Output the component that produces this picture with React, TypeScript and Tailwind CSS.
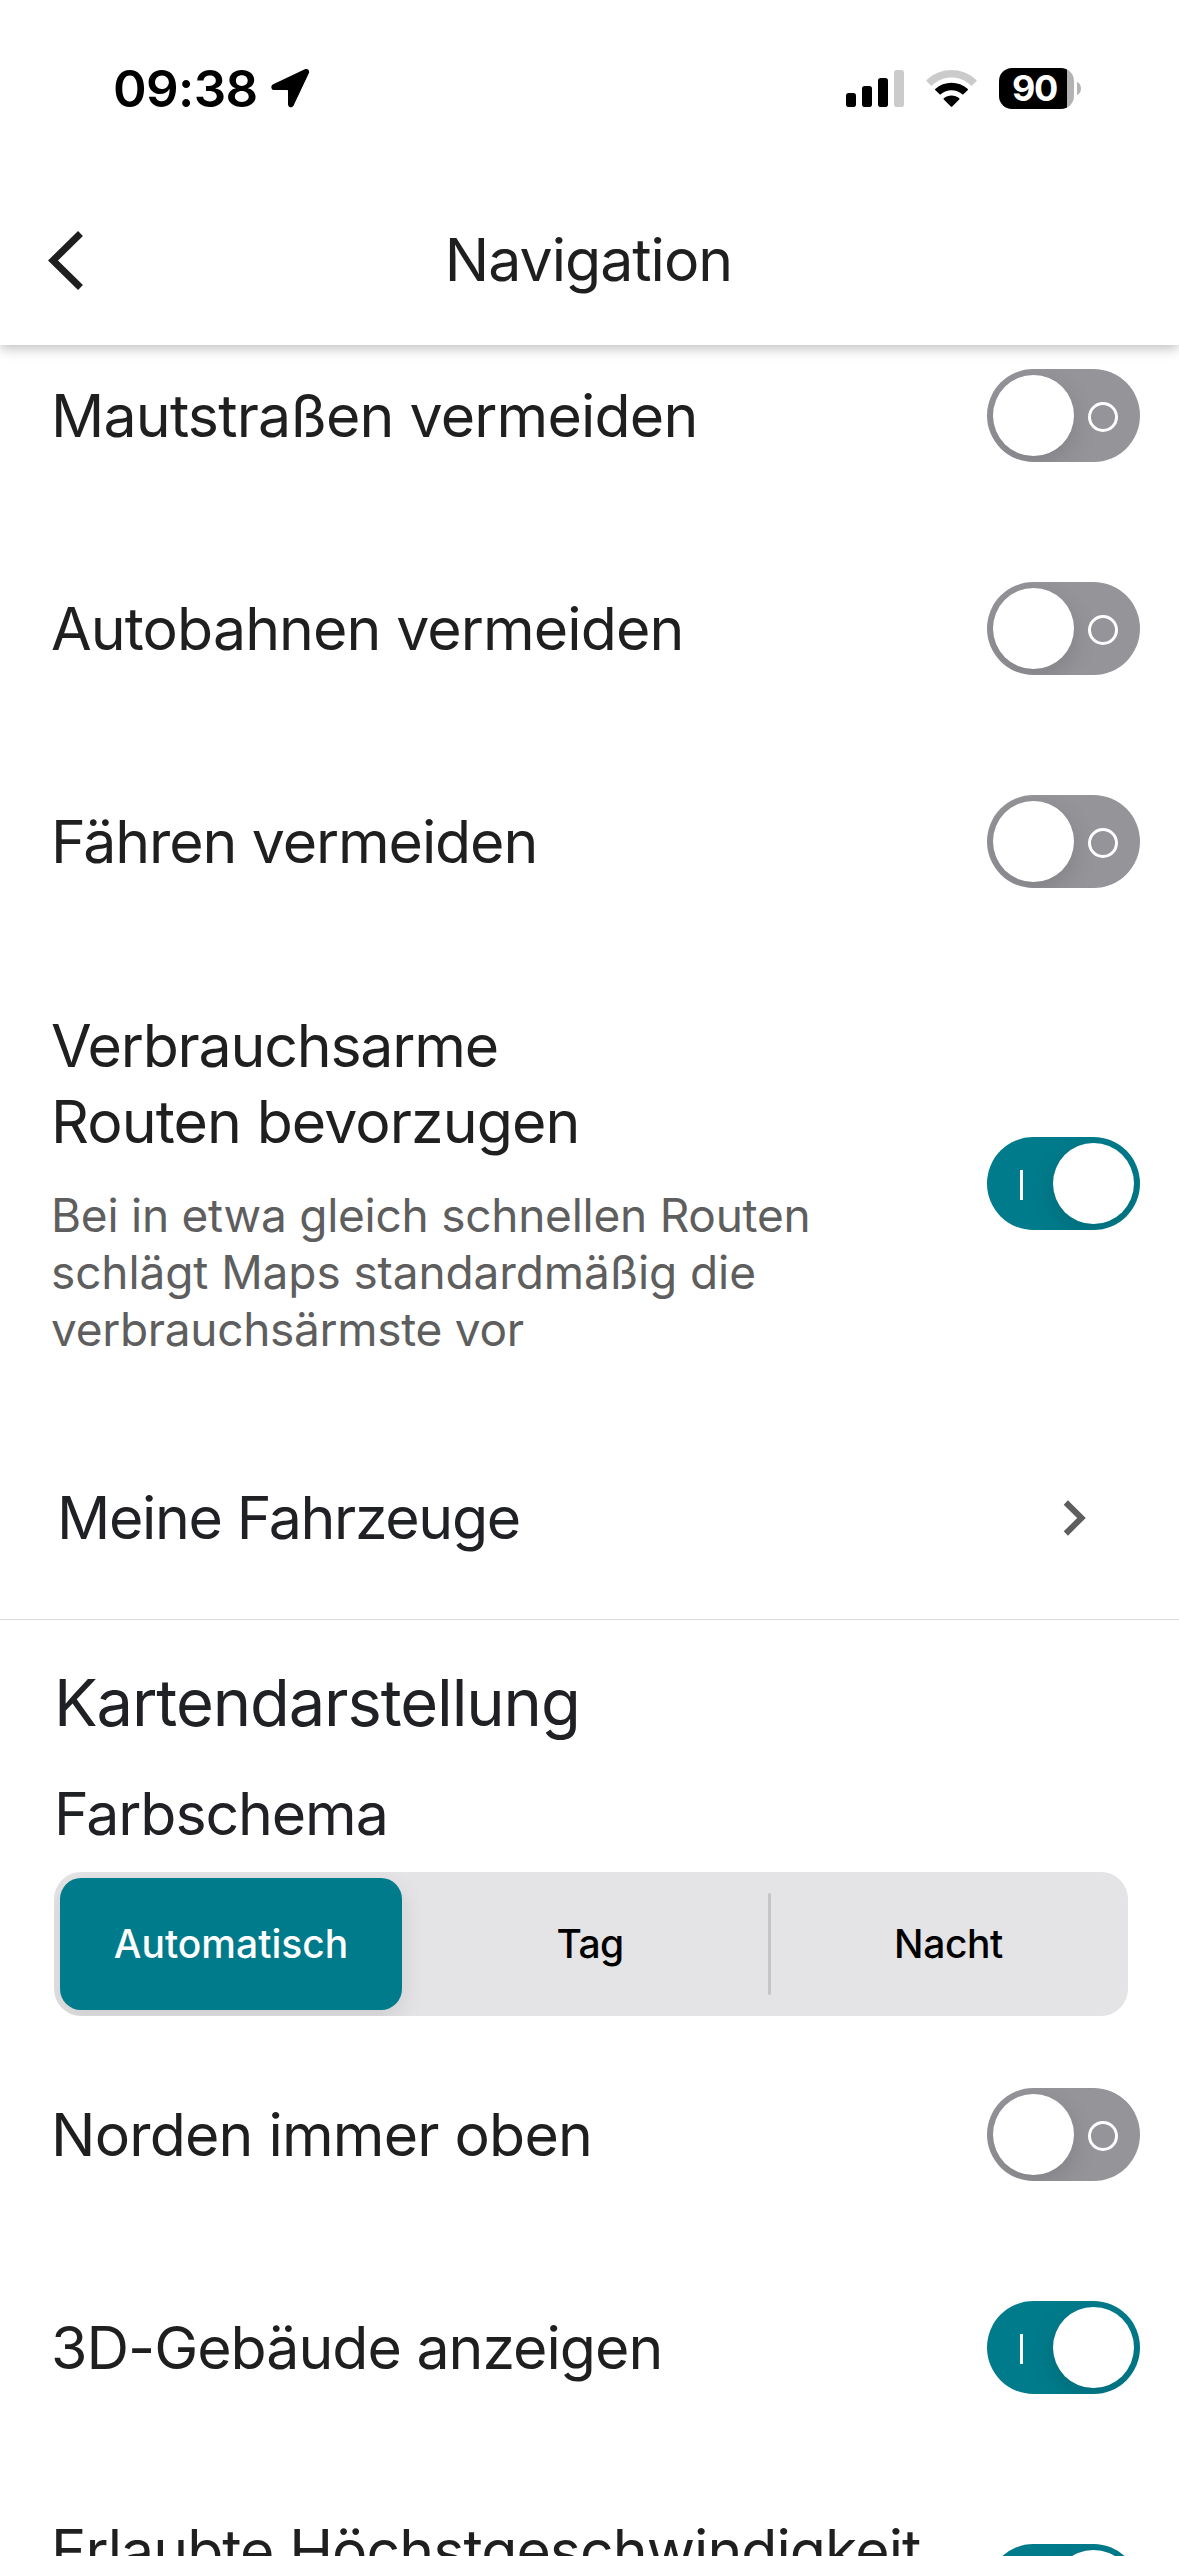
import { clsx } from "clsx";

function StatusBar() {
  return (
    <div className="flex h-[176px] items-center justify-between pr-[98px] pl-[113px]">
      <div className="flex items-center gap-3">
        <span className="text-[51px] leading-none font-semibold tracking-[-0.6px] text-black">09:38</span>
        <svg width="40" height="40" viewBox="0 0 40 40" fill="#000">
          <path d="M34.8 1.3 3.2 16.2C.3 17.6.9 22 4.2 22H17.2Q18 22 18 22.8V36.2C18 39.6 22.2 40.4 23.6 37.5L38.7 5.6C40.2 2.3 37.6 0 34.8 1.3Z" />
        </svg>
      </div>
      <div className="flex items-center">
        <svg width="58" height="37" viewBox="0 0 58 37">
          <rect x="0" y="23" width="10" height="14" rx="2.8" />
          <rect x="16" y="16" width="10" height="21" rx="2.8" />
          <rect x="32" y="8" width="10" height="29" rx="2.8" />
          <rect x="48" y="0" width="10" height="37" rx="2.8" fill="#cbcbcb" />
        </svg>
        <svg className="ml-[22px]" width="51" height="37" viewBox="0 0 51 37">
          <path
            d="M.6 10C14.5-3.3 36.5-3.3 50.4 10Q51 10.6 50.4 11.2L46.1 15.4Q45.5 16 44.9 15.4C33.8 4.9 17.2 4.9 6.1 15.4Q5.5 16 4.9 15.4L.6 11.2Q0 10.6.6 10Z"
            fill="#cbcbcb"
          />
          <path d="M9.2 18.9C18.4 10.6 32.6 10.6 41.8 18.9Q42.4 19.5 41.8 20.1L37.4 24.3Q36.8 24.9 36.2 24.3C30.1 18.9 20.9 18.9 14.8 24.3Q14.2 24.9 13.6 24.3L9.2 20.1Q8.6 19.5 9.2 18.9Z" />
          <path d="M17.8 28.2C22.2 24.6 28.8 24.6 33.2 28.2Q33.8 28.8 33.2 29.4L26.2 36.4Q25.5 37.1 24.8 36.4L17.8 29.4Q17.2 28.8 17.8 28.2Z" />
        </svg>
        <div className="ml-[22px] flex h-[41px] w-[75px] items-center justify-center overflow-hidden rounded-[13px] bg-[linear-gradient(to_right,#000_68px,#b3b3b3_68px)] pr-1 text-[36px] font-bold tracking-[-1.4px] text-white">
          90
        </div>
        <svg className="ml-[3px]" width="4" height="13" viewBox="0 0 4 13">
          <path d="M0 0C5.3 2 5.3 11 0 13Z" fill="#b3b3b3" />
        </svg>
      </div>
    </div>
  );
}

function Header() {
  return (
    <header className="relative z-10 h-[345px] bg-white shadow-[0_3px_12px_rgba(0,0,0,0.27)]">
      <StatusBar />
      <div className="grid h-[168px] grid-cols-[1fr_auto_1fr] items-center pl-12">
        <svg width="35" height="59" viewBox="0 0 35 59" fill="none" stroke="#1f1f1f" strokeWidth="7">
          <path d="M32.5 2.5 5 29.5 32.5 56.5" />
        </svg>
        <h1 className="-mt-0.5 -ml-[50px] text-[59px] leading-none tracking-[-1px]">Navigation</h1>
      </div>
    </header>
  );
}

function Toggle({ on = false }: { on?: boolean }) {
  return (
    <div
      className={clsx(
        "flex h-[93px] w-[153px] shrink-0 items-center overflow-hidden rounded-[46.5px] px-1.5",
        on ? "flex-row-reverse bg-[#007b8b]" : "bg-[#949499]",
      )}
    >
      <div className="size-[81px] rounded-full bg-white shadow-[0_8px_24px_rgba(0,0,0,0.13)]" />
      {on ? (
        <div className="mr-[30px] mt-[3px] h-[30px] w-[3px] bg-white" />
      ) : (
        <div className="ml-3.5 mt-[3px] size-[30px] rounded-full border-3 border-white" />
      )}
    </div>
  );
}

function Row({ label, on, tracking = "tracking-[-0.9px]" }: { label: string; on?: boolean; tracking?: string }) {
  return (
    <div className="flex h-[213px] shrink-0 items-center justify-between pr-[39px] pl-[51px]">
      <span className={clsx("text-[59px] leading-[76px]", tracking)}>{label}</span>
      <Toggle on={on} />
    </div>
  );
}

function ColorScheme() {
  return (
    <div className="mr-[51px] ml-[54px] flex h-[144px] shrink-0 items-center overflow-hidden rounded-[27px] bg-[#e4e4e6] p-1.5 text-[39px] text-black">
      <div className="flex h-full w-[342px] items-center justify-center rounded-[21px] bg-[#007b8b] font-medium text-white shadow-[0_9px_24px_rgba(0,0,0,0.1)]">
        Automatisch
      </div>
      <div className="flex h-full flex-1 items-center justify-center pl-2.5 font-[450] tracking-[-0.6px]">Tag</div>
      <div className="h-[102px] w-[3px] rounded-full bg-[#c5c5c7]" />
      <div className="flex h-full w-[351px] items-center justify-center pl-1 font-[450] tracking-[-0.4px]">Nacht</div>
    </div>
  );
}

export default function App() {
  return (
    <div className="flex h-[2556px] w-[1179px] flex-col overflow-hidden bg-white font-[Inter,'Liberation_Sans',sans-serif] text-[#1f1f1f]">
      <Header />
      <main className="-mt-9 flex min-h-0 flex-1 flex-col overflow-hidden">
        <Row label="Mautstraßen vermeiden" tracking="tracking-[-0.8px]" />
        <Row label="Autobahnen vermeiden" />
        <Row label="Fähren vermeiden" tracking="tracking-[-1.1px]" />

        <div className="flex h-[471px] shrink-0 items-center justify-between pr-[39px] pl-[51px]">
          <div className="-mt-0.5">
            <p className="text-[59px] leading-[76px] tracking-[-1.2px]">
              Verbrauchsarme
              <br />
              <span className="tracking-[-0.9px]">Routen bevorzugen</span>
            </p>
            <p className="mt-[27px] text-[46px] leading-[57px] tracking-[-0.1px] text-[#5e5e5e]">
              <span className="tracking-[-0.25px]">Bei in etwa gleich schnellen Routen</span>
              <br />
              schlägt Maps standardmäßig die
              <br />
              <span className="tracking-[-0.3px]">verbrauchsärmste vor</span>
            </p>
          </div>
          <Toggle on />
        </div>

        <div className="flex h-[201px] shrink-0 items-center justify-between border-b border-[#dadce0] pr-[92px] pb-[3px] pl-[57px] text-[#202124]">
          <span className="text-[59px] leading-none tracking-[-1.35px]">Meine Fahrzeuge</span>
          <svg width="24" height="36" viewBox="0 0 24 36" fill="none" stroke="#5e5e5e" strokeWidth="6">
            <path d="M2.8 2.5 18.5 18 2.8 33.5" />
          </svg>
        </div>

        <h2 className="mt-12 pl-[54px] text-[65px] leading-[70px] tracking-[-1.1px] text-[#202124]">Kartendarstellung</h2>
        <h3 className="mt-[41px] mb-[23px] pl-[54px] text-[59px] leading-[70px] tracking-[-1.1px] text-[#202124]">Farbschema</h3>
        <ColorScheme />

        <div className="mt-3 flex flex-col">
          <Row label="Norden immer oben" tracking="tracking-[-0.8px]" />
          <Row label="3D-Gebäude anzeigen" on tracking="tracking-[-1px]" />
          <div className="flex shrink-0 items-start justify-between pt-[59px] pr-[39px] pl-[51px]">
            <span className="text-[59px] leading-[76px] tracking-[-0.95px]">Erlaubte Höchstgeschwindigkeit</span>
            <div className="pt-[31px]">
              <Toggle on />
            </div>
          </div>
        </div>
      </main>
    </div>
  );
}
